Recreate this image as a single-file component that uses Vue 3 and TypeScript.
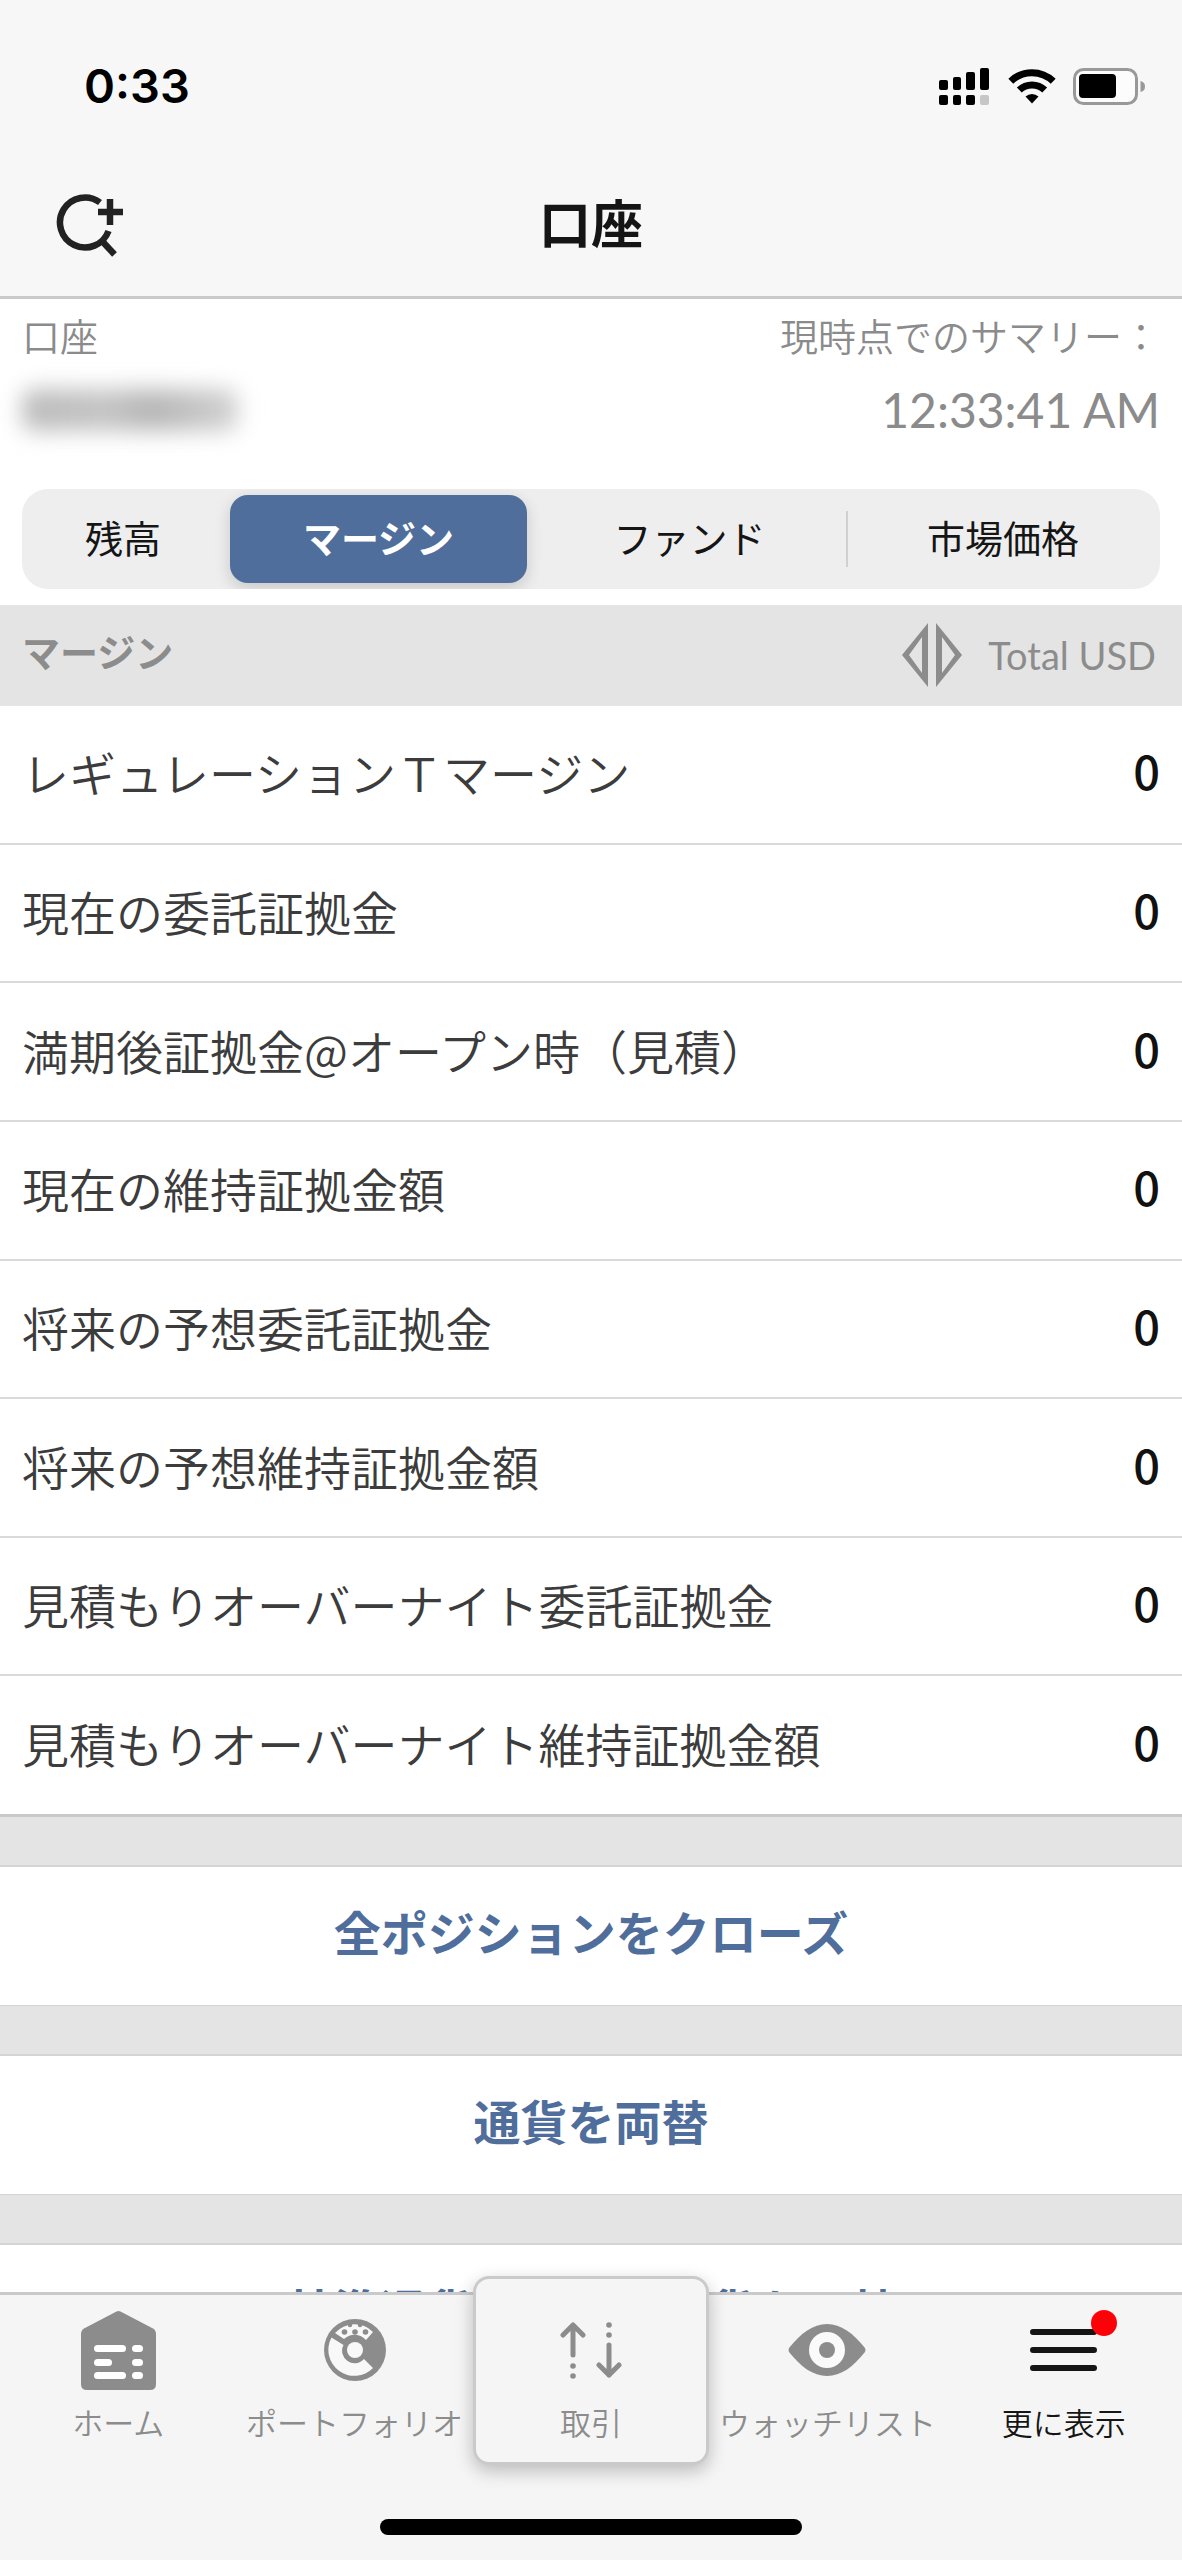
<script setup lang="ts">
import { ref } from 'vue'

interface MarginRow {
  label: string
  value: string
}

const tabs: string[] = ['残高', 'マージン', 'ファンド', '市場価格']
const activeTab = ref<number>(1)

const rows: MarginRow[] = [
  { label: 'レギュレーションＴマージン', value: '0' },
  { label: '現在の委託証拠金', value: '0' },
  { label: '満期後証拠金@オープン時（見積）', value: '0' },
  { label: '現在の維持証拠金額', value: '0' },
  { label: '将来の予想委託証拠金', value: '0' },
  { label: '将来の予想維持証拠金額', value: '0' },
  { label: '見積もりオーバーナイト委託証拠金', value: '0' },
  { label: '見積もりオーバーナイト維持証拠金額', value: '0' },
]

const actions: string[] = ['全ポジションをクローズ', '通貨を両替', '基準通貨以外の全通貨を両替']
</script>

<template>
  <div class="screen">
    <header class="top">
      <div class="status">
        <span class="clock">0:33</span>
        <div class="indicators">
          <svg class="signal" width="50" height="37" viewBox="0 0 50 37" aria-hidden="true">
            <rect x="0" y="12" width="9" height="10" rx="2" />
            <rect x="14" y="9" width="8" height="13" rx="2" />
            <rect x="27" y="4" width="9" height="18" rx="2" />
            <rect x="41" y="0" width="9" height="22" rx="2" />
            <rect x="0" y="27" width="9" height="10" rx="2" />
            <rect x="14" y="27" width="8" height="10" rx="2" />
            <rect x="27" y="27" width="9" height="10" rx="2" />
            <rect x="41" y="27" width="9" height="10" rx="2" fill="#c6c6c6" />
          </svg>
          <svg class="wifi" width="48" height="37" viewBox="0 0 48 37" aria-hidden="true">
            <g fill="none" stroke="#000" stroke-width="7">
              <path d="M2.8 13.2A30.5 30.5 0 0 1 45.2 13.2" />
              <path d="M11.3 22A18.3 18.3 0 0 1 36.7 22" />
            </g>
            <path d="M17.5 28.5A9.5 9.5 0 0 1 30.5 28.5L24 35.5Z" />
          </svg>
          <svg width="73" height="37" viewBox="0 0 73 37" aria-hidden="true">
            <rect x="1.5" y="1.5" width="62" height="34" rx="9" fill="#fcfcfc" stroke="#999" stroke-width="3" />
            <rect x="6" y="6" width="37" height="24" rx="4" />
            <path d="M67.500 13Q72 14 72 18.500T67.500 24Z" fill="#999" />
          </svg>
        </div>
      </div>
      <div class="titlebar">
        <button class="search" type="button" aria-label="検索">
          <svg width="67" height="64" viewBox="0 0 67 64" fill="none" stroke="#222">
            <path d="M44 8.500A25 25 0 1 0 52.500 37" stroke-width="6.500" />
            <path d="M54 5V31M42 18H67" stroke-width="6.500" />
            <path d="M46 47L58.500 60.500" stroke-width="6.500" />
          </svg>
        </button>
        <h1>口座</h1>
      </div>
    </header>

    <main class="content">
      <section class="summary">
        <div class="line">
          <span>口座</span>
          <span>現時点でのサマリー：</span>
        </div>
        <div class="line">
          <span class="masked"></span>
          <time class="time">12:33:41 AM</time>
        </div>
      </section>

      <div class="tabs" role="tablist">
        <button
          v-for="(tab, i) in tabs"
          :key="tab"
          type="button"
          role="tab"
          class="tab"
          :class="{ active: activeTab === i, divided: i === 3 && activeTab < 2 }"
          :aria-selected="activeTab === i"
          @click="activeTab = i"
        >
          {{ tab }}
        </button>
      </div>

      <table class="margins">
        <thead>
          <tr>
            <th scope="col" class="head-label">マージン</th>
            <th scope="col" class="head-total">
              <span class="total">
                <svg width="60" height="64" viewBox="0 0 60 64" fill="#8c8c8c" fill-rule="evenodd" aria-hidden="true">
                  <path d="M0 32L26 0V64ZM7 32L20 14V50Z" />
                  <path d="M60 32L34 0V64ZM53 32L40 14V50Z" />
                </svg>
                Total USD
              </span>
            </th>
          </tr>
        </thead>
        <tbody>
          <tr v-for="row in rows" :key="row.label">
            <th scope="row" class="label">{{ row.label }}</th>
            <td class="value">{{ row.value }}</td>
          </tr>
        </tbody>
      </table>

      <div class="actions">
        <button v-for="action in actions" :key="action" type="button" class="action">{{ action }}</button>
      </div>
    </main>

    <footer class="bottom">
      <nav class="nav">
        <a href="#home" class="item">
          <span class="icon">
            <svg width="75" height="79" viewBox="0 0 75 79" aria-hidden="true">
              <path d="M35.500 .6Q37.500 -.4 39.500 .6L72 17.500Q75 19.500 75 23V73Q75 79 69 79H6Q0 79 0 73V23Q0 19.500 3 17.500Z" fill="#8c8c8c" />
              <g fill="#fff">
                <rect x="13" y="34" width="32" height="7" rx="3.500" />
                <rect x="51" y="34" width="11" height="7" rx="3.500" />
                <rect x="13" y="48" width="18" height="7" rx="3.500" />
                <rect x="51" y="48" width="11" height="7" rx="3.500" />
                <rect x="13" y="61" width="32" height="7" rx="3.500" />
                <rect x="51" y="61" width="11" height="7" rx="3.500" />
              </g>
            </svg>
          </span>
          ホーム
        </a>
        <a href="#portfolio" class="item">
          <span class="icon">
            <svg width="62" height="62" viewBox="0 0 62 62" fill="#8c8c8c" aria-hidden="true">
              <circle cx="31" cy="31" r="31" />
              <g fill="#f8f8f8">
                <path d="M49 49A26 26 0 0 1 7.500 18.500L19.500 26A12.500 12.500 0 0 0 40 40Z" />
                <path d="M11 14A26 26 0 0 1 49 13L42 21A15 15 0 0 0 20 20Z" />
                <circle cx="31" cy="31" r="8" />
              </g>
              <circle cx="20.500" cy="13" r="2.800" />
              <circle cx="31" cy="13" r="2.800" />
              <circle cx="41.500" cy="13" r="2.800" />
              <circle cx="26" cy="6" r="2.200" />
              <circle cx="36" cy="6" r="2.200" />
            </svg>
          </span>
          ポートフォリオ
        </a>
        <a href="#trade" class="item raised">
          <span class="icon">
            <svg width="62" height="58" viewBox="0 0 62 58" fill="#8c8c8c" aria-hidden="true">
              <g fill="none" stroke="#8c8c8c" stroke-width="5" stroke-linecap="round" stroke-linejoin="round">
                <path d="M13 34V4M3 14L13 4L23 14" />
                <path d="M49 24V54M39 44L49 54L59 44" />
              </g>
              <circle cx="13" cy="45" r="2.800" />
              <circle cx="13" cy="55" r="2.800" />
              <circle cx="49" cy="4" r="2.800" />
              <circle cx="49" cy="14" r="2.800" />
            </svg>
          </span>
          取引
        </a>
        <a href="#watchlist" class="item">
          <span class="icon">
            <svg width="78" height="52" viewBox="0 0 78 52" aria-hidden="true">
              <path d="M1 24C13 9 25 0 39 0S65 9 77 24Q78 26 77 28C65 43 53 52 39 52S13 43 1 28Q0 26 1 24Z" fill="#8c8c8c" />
              <circle cx="39" cy="26" r="18" fill="#fafafa" />
              <circle cx="39" cy="26" r="8" fill="#8c8c8c" />
            </svg>
          </span>
          ウォッチリスト
        </a>
        <a href="#more" class="item current">
          <span class="icon">
            <svg width="67" height="42" viewBox="0 0 67 42" stroke="#151515" stroke-width="6" stroke-linecap="round" aria-hidden="true">
              <path d="M3 3H64M3 21H64M3 39H64" />
            </svg>
            <span class="badge"></span>
          </span>
          更に表示
        </a>
      </nav>
      <div class="home-bar"></div>
    </footer>
  </div>
</template>

<style>
body {
  margin: 0;
}
</style>

<style scoped>
.screen {
  display: flex;
  flex-direction: column;
  height: 100vh;
  overflow: hidden;
  background: #fff;
  color: #151515;
  font-family: Lato, "Noto Sans CJK JP", sans-serif;
}
button {
  margin: 0;
  padding: 0;
  border: 0;
  background: none;
  color: inherit;
  font: inherit;
}

/* status bar and title */
.top {
  flex: none;
  background: #f7f7f7;
  border-bottom: 3px solid #cacaca;
}
.status {
  display: flex;
  justify-content: space-between;
  align-items: center;
  padding: 56px 36px 0 84px;
}
.clock {
  color: #000;
  font: 600 47px/60px Inter, sans-serif;
}
.indicators {
  display: flex;
  align-items: center;
}
.signal {
  margin-right: 19px;
}
.wifi {
  margin-right: 17px;
}
.titlebar {
  display: grid;
  grid-template-columns: 1fr auto 1fr;
  align-items: center;
  padding: 68px 56px 32px;
}
.search {
  display: flex;
  justify-self: start;
  padding: 10px 0 6px;
}
h1 {
  margin: 0;
  font-size: 52px;
  line-height: 80px;
  font-weight: 700;
}

/* account summary */
.content {
  flex: 1;
  min-height: 0;
  overflow: hidden;
}
.summary {
  padding: 10px 22px 0;
  color: #8b8b8b;
  font-size: 38px;
  font-weight: 350;
}
.line {
  display: flex;
  justify-content: space-between;
  align-items: center;
  line-height: 54px;
}
.line + .line {
  margin-top: 20px;
}
.masked {
  width: 216px;
  height: 42px;
  border-radius: 12px;
  background: linear-gradient(90deg, #bcbcbc, #c4c4c4 40%, #b6b6b6 60%, #d2d2d2);
  filter: blur(11px);
}
.time {
  font-size: 48px;
  font-weight: 400;
}

/* segmented control */
.tabs {
  display: grid;
  grid-template-columns: 202fr 309fr 313fr 314fr;
  height: 100px;
  margin: 52px 22px 16px;
  overflow: hidden;
  border-radius: 26px;
  background: #eee;
}
.tab {
  position: relative;
  padding-bottom: 2px;
  font-size: 38px;
  line-height: 54px;
}
.tab.active {
  margin: 6px;
  border-radius: 18px;
  background: #4f6e9c;
  box-shadow: 0 5px 16px rgba(0, 0, 0, 0.16);
  color: #fff;
  font-weight: 700;
}
.tab.divided::before {
  content: "";
  position: absolute;
  left: 0;
  top: 22px;
  bottom: 22px;
  width: 2px;
  background: #d0d0d0;
}

/* margin table */
.margins {
  width: 100%;
  height: 1212px;
  border-collapse: separate;
  border-spacing: 0;
}
.margins th,
.margins td {
  box-sizing: border-box;
  padding: 0 22px;
  line-height: 64px;
}
.margins thead th {
  height: 101px;
  background: #e4e4e4;
  color: #8c8c8c;
  font-size: 38px;
}
.head-label {
  text-align: left;
  font-weight: 700;
}
.margins .head-label {
  padding-bottom: 8px;
}
.margins .head-total {
  padding-right: 26px;
  padding-bottom: 2px;
  font-weight: 400;
}
.total {
  display: flex;
  justify-content: flex-end;
  align-items: center;
  gap: 26px;
}
.label,
.value {
  border-bottom: 2px solid #dadada;
}
.margins .label {
  padding-bottom: 4px;
  color: #3c3c3c;
  font-family: "Noto Sans CJK JP", sans-serif;
  font-size: 47px;
  font-weight: 350;
  text-align: left;
}
.margins .value {
  padding-bottom: 8px;
  color: #111;
  font-family: "Noto Sans CJK JP", sans-serif;
  font-size: 47px;
  font-weight: 500;
  text-align: right;
}
tbody tr:last-child > * {
  border-bottom: 3px solid #c9c9c9;
}

/* actions */
.actions {
  display: flex;
  flex-direction: column;
  gap: 48px;
  padding-top: 48px;
  background: #e4e4e4;
}
.action {
  padding: 34px 0 40px;
  border-top: 2px solid #d4d4d4;
  border-bottom: 1px solid #d4d4d4;
  background: #fff;
  color: #4f6e9c;
  font-size: 47px;
  font-weight: 700;
  line-height: 64px;
}

/* bottom navigation */
.bottom {
  position: relative;
  flex: none;
  border-top: 3px solid #cacaca;
  background: #f5f5f5;
}
.nav {
  display: grid;
  grid-template-columns: repeat(5, 1fr);
  align-items: start;
}
.item {
  display: flex;
  flex-direction: column;
  align-items: center;
  gap: 10px;
  padding-top: 15px;
  color: #8c8c8c;
  font-size: 31px;
  font-weight: 350;
  line-height: 46px;
  text-decoration: none;
  white-space: nowrap;
}
.icon {
  position: relative;
  display: flex;
  align-items: center;
  height: 80px;
}
.raised {
  margin-top: -19px;
  padding: 31px 0 16px;
  border: 3px solid #cacaca;
  border-radius: 16px;
  background: #f5f5f5;
  box-shadow: 0 6px 18px rgba(0, 0, 0, 0.24);
}
.current {
  color: #151515;
}
.badge {
  position: absolute;
  top: 0;
  right: -20px;
  width: 26px;
  height: 26px;
  border-radius: 50%;
  background: #ff0008;
}
.home-bar {
  width: 422px;
  height: 16px;
  margin: 54px auto 25px;
  border-radius: 8px;
  background: #000;
}
</style>
